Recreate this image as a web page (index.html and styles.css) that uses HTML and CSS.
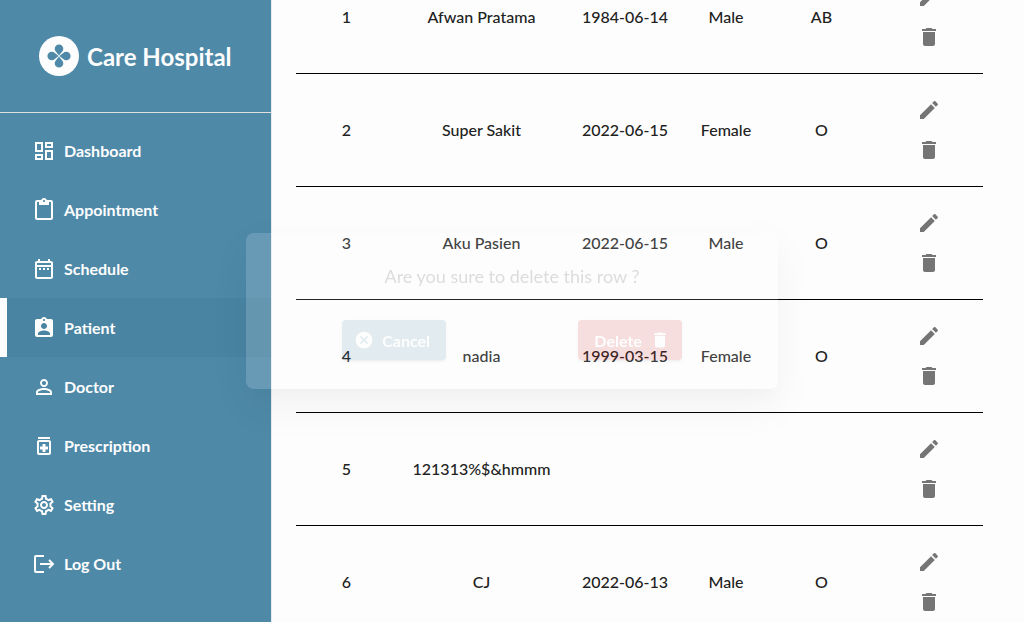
FILE: index.html
```html
<!DOCTYPE html>
<html lang="en">
<head>
<meta charset="utf-8">
<title>Care Hospital</title>
<link rel="stylesheet" href="styles.css">
</head>
<body>
<svg class="sprite" aria-hidden="true">
  <symbol id="edit" viewBox="0 0 24 24"><path d="M3 17.25V21h3.75L17.81 9.94l-3.75-3.75L3 17.25zM20.71 7.04c.39-.39.39-1.02 0-1.41l-2.34-2.34c-.39-.39-1.02-.39-1.41 0l-1.83 1.83 3.75 3.75 1.83-1.83z"/></symbol>
  <symbol id="trash" viewBox="0 0 24 24"><path d="M6 19c0 1.1.9 2 2 2h8c1.1 0 2-.9 2-2V7H6v12zM19 4h-3.5l-1-1h-5l-1 1H5v2h14V4z"/></symbol>
</svg>
<div class="app">
  <aside class="sidebar">
    <header class="brand">
      <svg class="logo" viewBox="0 0 40 40" aria-hidden="true">
        <circle class="logo-disc" cx="20" cy="20" r="20"/>
        <g class="logo-petals">
          <path id="petal" d="M20 19.600L17 15.800A4.300 4.300 0 1 1 23 15.800z"/>
          <use href="#petal" transform="rotate(90 20 20)"/>
          <use href="#petal" transform="rotate(180 20 20)"/>
          <use href="#petal" transform="rotate(270 20 20)"/>
        </g>
      </svg>
      <span class="brand-name">Care Hospital</span>
    </header>
    <nav class="nav">
      <a class="nav-item" href="#"><svg class="icon" viewBox="0 0 24 24"><path d="M19 5v2h-4V5h4M9 5v6H5V5h4m10 8v6h-4v-6h4M9 17v2H5v-2h4M21 3h-8v6h8V3zM11 3H3v10h8V3zm10 8h-8v10h8V11zm-10 4H3v6h8v-6z"/></svg>Dashboard</a>
      <a class="nav-item" href="#"><svg class="icon" viewBox="0 0 24 24"><path d="M19 2h-4.18C14.4.84 13.3 0 12 0c-1.3 0-2.4.84-2.82 2H5c-1.1 0-2 .9-2 2v16c0 1.1.9 2 2 2h14c1.1 0 2-.9 2-2V4c0-1.1-.9-2-2-2zm-7 0c.55 0 1 .45 1 1s-.45 1-1 1-1-.45-1-1 .45-1 1-1zm7 18H5V4h2v3h10V4h2v16z"/></svg>Appointment</a>
      <a class="nav-item" href="#"><svg class="icon" viewBox="0 0 24 24"><path d="M7 11h2v2H7v-2zm14-5v14c0 1.1-.9 2-2 2H5c-1.11 0-2-.9-2-2l.01-14c0-1.1.88-2 1.99-2h1V2h2v2h8V2h2v2h1c1.1 0 2 .9 2 2zM5 8h14V6H5v2zm14 12V10H5v10h14zm-4-7h2v-2h-2v2zm-4 0h2v-2h-2v2z"/></svg>Schedule</a>
      <a class="nav-item active" href="#" aria-current="page"><svg class="icon" viewBox="0 0 24 24"><path d="M19 3h-4.18C14.4 1.84 13.3 1 12 1c-1.3 0-2.4.84-2.82 2H5c-1.1 0-2 .9-2 2v14c0 1.1.9 2 2 2h14c1.1 0 2-.9 2-2V5c0-1.1-.9-2-2-2zm-7 0c.55 0 1 .45 1 1s-.45 1-1 1-1-.45-1-1 .45-1 1-1zm0 4c1.66 0 3 1.34 3 3s-1.34 3-3 3-3-1.34-3-3 1.34-3 3-3zm6 12H6v-1.4c0-2 4-3.1 6-3.1s6 1.1 6 3.1V19z"/></svg>Patient</a>
      <a class="nav-item" href="#"><svg class="icon" viewBox="0 0 24 24"><path d="M12 5.9c1.16 0 2.1.94 2.1 2.1s-.94 2.1-2.1 2.1S9.9 9.16 9.9 8s.94-2.1 2.1-2.1m0 9c2.97 0 6.1 1.46 6.1 2.1v1.1H5.9V17c0-.64 3.13-2.1 6.1-2.1M12 4C9.79 4 8 5.79 8 8s1.79 4 4 4 4-1.79 4-4-1.79-4-4-4zm0 9c-2.67 0-8 1.34-8 4v3h16v-3c0-2.66-5.33-4-8-4z"/></svg>Doctor</a>
      <a class="nav-item" href="#"><svg class="icon" viewBox="0 0 24 24"><path d="M6 3h12v2H6zm11 3H7c-1.1 0-2 .9-2 2v11c0 1.1.9 2 2 2h10c1.1 0 2-.9 2-2V8c0-1.1-.9-2-2-2zm0 13H7V8h10v11zm-6.500-1h3v-2.500H16v-3h-2.500V10h-3v2.500H8v3h2.500z"/></svg>Prescription</a>
      <a class="nav-item" href="#"><svg class="icon" viewBox="0 0 24 24"><path d="M19.430 12.980c.04-.32.07-.64.07-.98 0-.34-.03-.66-.07-.98l2.110-1.650c.19-.15.24-.42.12-.64l-2-3.460c-.09-.16-.26-.25-.44-.25-.06 0-.12.01-.17.03l-2.490 1c-.52-.4-1.080-.73-1.690-.98l-.38-2.650C14.460 2.180 14.250 2 14 2h-4c-.25 0-.46.18-.49.42l-.38 2.650c-.61.25-1.170.59-1.690.98l-2.490-1c-.06-.02-.12-.03-.18-.03-.17 0-.34.09-.43.25l-2 3.460c-.13.22-.07.49.12.64l2.110 1.650c-.04.32-.07.65-.07.98 0 .33.03.66.07.98l-2.110 1.650c-.19.15-.24.42-.12.64l2 3.460c.09.16.26.25.44.25.06 0 .12-.01.17-.03l2.490-1c.52.4 1.080.73 1.690.98l.38 2.650c.03.24.24.42.49.42h4c.25 0 .46-.18.49-.42l.38-2.650c.61-.25 1.170-.59 1.690-.98l2.490 1c.06.02.12.03.18.03.17 0 .34-.09.43-.25l2-3.460c.12-.22.07-.49-.12-.64l-2.110-1.650zm-1.980-1.710c.04.31.05.52.05.73 0 .21-.02.43-.05.73l-.14 1.130.89.7 1.080.84-.7 1.210-1.270-.51-1.040-.42-.9.68c-.43.32-.84.56-1.250.73l-1.060.43-.16 1.130-.2 1.350h-1.400l-.19-1.350-.16-1.130-1.060-.43c-.43-.18-.83-.41-1.230-.71l-.91-.7-1.060.43-1.270.51-.7-1.210 1.080-.84.89-.7-.14-1.130c-.03-.31-.05-.54-.05-.74s.02-.43.05-.73l.14-1.130-.89-.7-1.080-.84.7-1.210 1.270.51 1.040.42.9-.68c.43-.32.84-.56 1.250-.73l1.060-.43.16-1.130.2-1.350h1.390l.19 1.350.16 1.130 1.060.43c.43.18.83.41 1.230.71l.91.7 1.060-.43 1.270-.51.7 1.210-1.070.85-.89.7.14 1.130zM12 8c-2.210 0-4 1.790-4 4s1.790 4 4 4 4-1.790 4-4-1.790-4-4-4zm0 6c-1.100 0-2-.9-2-2s.9-2 2-2 2 .9 2 2-.9 2-2 2z"/></svg>Setting</a>
      <a class="nav-item" href="#"><svg class="icon line" viewBox="0 0 24 24"><path d="M12 4H4Q3 4 3 5v14Q3 20 4 20H12M8 12h13M17 8l4 4-4 4"/></svg>Log Out</a>
    </nav>
  </aside>
  <main class="content">
    <table class="patients">
      <colgroup><col class="c-no"><col class="c-name"><col class="c-date"><col class="c-gender"><col class="c-blood"><col class="c-action"></colgroup>
      <tbody>
        <tr><td>1</td><td>Afwan Pratama</td><td>1984-06-14</td><td>Male</td><td>AB</td><td><div class="actions"><button class="icon-btn" aria-label="Edit"><svg class="icon"><use href="#edit"/></svg></button><button class="icon-btn" aria-label="Delete"><svg class="icon"><use href="#trash"/></svg></button></div></td></tr>
        <tr><td>2</td><td>Super Sakit</td><td>2022-06-15</td><td>Female</td><td>O</td><td><div class="actions"><button class="icon-btn" aria-label="Edit"><svg class="icon"><use href="#edit"/></svg></button><button class="icon-btn" aria-label="Delete"><svg class="icon"><use href="#trash"/></svg></button></div></td></tr>
        <tr><td>3</td><td>Aku Pasien</td><td>2022-06-15</td><td>Male</td><td>O</td><td><div class="actions"><button class="icon-btn" aria-label="Edit"><svg class="icon"><use href="#edit"/></svg></button><button class="icon-btn" aria-label="Delete"><svg class="icon"><use href="#trash"/></svg></button></div></td></tr>
        <tr><td>4</td><td>nadia</td><td>1999-03-15</td><td>Female</td><td>O</td><td><div class="actions"><button class="icon-btn" aria-label="Edit"><svg class="icon"><use href="#edit"/></svg></button><button class="icon-btn" aria-label="Delete"><svg class="icon"><use href="#trash"/></svg></button></div></td></tr>
        <tr><td>5</td><td>121313%$&amp;hmmm</td><td></td><td></td><td></td><td><div class="actions"><button class="icon-btn" aria-label="Edit"><svg class="icon"><use href="#edit"/></svg></button><button class="icon-btn" aria-label="Delete"><svg class="icon"><use href="#trash"/></svg></button></div></td></tr>
        <tr><td>6</td><td>CJ</td><td>2022-06-13</td><td>Male</td><td>O</td><td><div class="actions"><button class="icon-btn" aria-label="Edit"><svg class="icon"><use href="#edit"/></svg></button><button class="icon-btn" aria-label="Delete"><svg class="icon"><use href="#trash"/></svg></button></div></td></tr>
      </tbody>
    </table>
  </main>
</div>
<div class="overlay">
  <div class="dialog" role="dialog" aria-labelledby="question">
    <p class="question" id="question">Are you sure to delete this row ?</p>
    <div class="choices">
      <button class="btn cancel"><svg class="btn-icon" viewBox="0 0 24 24"><path d="M12 2C6.470 2 2 6.470 2 12s4.470 10 10 10 10-4.470 10-10S17.530 2 12 2zm5 13.590L15.590 17 12 13.410 8.410 17 7 15.590 10.590 12 7 8.410 8.410 7 12 10.590 15.590 7 17 8.410 13.410 12 17 15.590z"/></svg>Cancel</button>
      <button class="btn delete">Delete<svg class="btn-icon"><use href="#trash"/></svg></button>
    </div>
  </div>
</div>
</body>
</html>
```
FILE: styles.css
```css
* { box-sizing: border-box; }

body {
  margin: 0;
  background: #fdfdfd;
  color: #212121;
  font-family: Lato, "Liberation Sans", sans-serif;
  font-size: 16px;
}

.sprite { display: none; }

.icon {
  width: 24px;
  height: 24px;
  flex: none;
  fill: currentColor;
}

.icon.line {
  fill: none;
  stroke: currentColor;
  stroke-width: 2;
}

.app {
  display: flex;
  height: 100vh;
  overflow: hidden;
}

.sidebar {
  flex: none;
  width: 272px;
  border-right: 1px solid #e4eaee;
  background: #4e89a8;
  color: #fdfdfd;
}

.brand {
  display: flex;
  align-items: center;
  gap: 8px;
  height: 113px;
  padding-left: 39px;
  border-bottom: 1px solid #e0e0e0;
}

.logo { width: 40px; height: 40px; }
.logo-disc { fill: #fdfdfd; }
.logo-petals { fill: #4e89a8; }

.brand-name {
  font-size: 24px;
  font-weight: 700;
}

.nav { padding-top: 8px; }

.nav-item {
  display: flex;
  align-items: center;
  gap: 8px;
  height: 59px;
  padding-left: 25px;
  border-left: 7px solid transparent;
  color: inherit;
  font-weight: 700;
  text-decoration: none;
}

.nav-item.active {
  border-left-color: #fdfdfd;
  background: #4984a3;
}

.content {
  flex: 1;
  min-width: 0;
  padding: 0 41px 0 24px;
  overflow: hidden;
}

/* The list is scrolled partway into its first row. */
.patients {
  width: 100%;
  margin-top: -39px;
  border-spacing: 0;
  table-layout: fixed;
  font-weight: 500;
  text-align: center;
}

.c-no { width: 101px; }
.c-name { width: 169px; }
.c-date { width: 118px; }
.c-gender { width: 84px; }
.c-blood { width: 107px; }
.c-action { width: 108px; }

.patients td {
  height: 113px;
  padding: 0 0 2px;
  border-bottom: 1px solid #000;
}

.patients td:last-child { padding: 0; }

.actions {
  display: flex;
  flex-direction: column;
  align-items: center;
}

.icon-btn {
  display: flex;
  padding: 8px;
  border: 0;
  background: none;
  color: #757575;
}

.overlay {
  position: fixed;
  inset: 0;
  display: flex;
  align-items: center;
  justify-content: center;
  opacity: 0.15;
}

.dialog {
  width: 532px;
  padding: 30px 30px 29px;
  border-radius: 8px;
  background: #fdfdfd;
  box-shadow: 0 11px 15px -7px rgba(0, 0, 0, 0.2), 0 24px 38px 3px rgba(0, 0, 0, 0.14), 0 9px 46px 8px rgba(0, 0, 0, 0.12);
}

.question {
  margin: 0 0 30px;
  font-size: 18px;
  line-height: 27px;
  text-align: center;
}

.choices {
  display: flex;
  justify-content: space-around;
}

.btn {
  display: flex;
  align-items: center;
  gap: 8px;
  height: 40px;
  border: 0;
  border-radius: 4px;
  box-shadow: 0 3px 1px -2px rgba(0, 0, 0, 0.2), 0 2px 2px rgba(0, 0, 0, 0.14), 0 1px 5px rgba(0, 0, 0, 0.12);
  color: #fff;
  font-family: inherit;
  font-size: 16px;
  font-weight: 700;
}

.btn-icon {
  width: 20px;
  height: 20px;
  fill: currentColor;
}

.cancel { padding: 0 16px 0 12px; background: #4e89a8; }
.delete { padding: 0 12px 0 16px; background: #d32f2f; }
```
